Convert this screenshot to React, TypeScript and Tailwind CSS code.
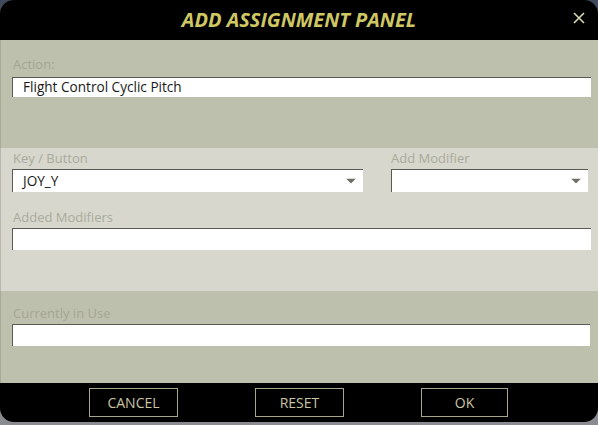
import React from "react";

const font = { fontFamily: '"Open Sans", "DejaVu Sans", sans-serif' };

function Arrow() {
  return (
    <svg width="10" height="5" viewBox="0 0 10 5" className="absolute right-[7px] top-1/2 -translate-y-1/2">
      <polygon points="0,0 10,0 5,5" fill="#6e6e66" />
    </svg>
  );
}

function Field({ className, children, arrow }: { className: string; children?: React.ReactNode; arrow?: boolean }) {
  return (
    <div className={`relative bg-white border-t border-l border-[#5a5a55] flex items-center pl-[10px] text-[13.6px] text-[#1a1a1a] ${className}`}>
      {children}
      {arrow ? <Arrow /> : null}
    </div>
  );
}

export default function App() {
  return (
    <div className="w-[598px] h-[425px] bg-[linear-gradient(180deg,#3f4b5c_0%,#5a6272_50%,#8a8c92_100%)] overflow-hidden" style={font}>
      <div className="w-[598px] h-[422px] bg-black rounded-[14px] overflow-hidden flex flex-col">
        <div className="h-[40px] relative flex items-center justify-center">
          <span className="text-[#cfc764] text-[20px] font-bold italic">ADD ASSIGNMENT PANEL</span>
          <svg width="12" height="12" viewBox="0 0 12 12" className="absolute left-[573px] top-[12px]">
            <path d="M1 1 L11 11 M11 1 L1 11" stroke="#dcd8b0" strokeWidth="1.6" />
          </svg>
        </div>
        <div className="h-[108px] bg-[#bec0ae] pt-[16px] pl-[11px] border-l border-[#a8aa98]">
          <div className="h-[16px] leading-[16px] text-[13px] text-[#a4a692] pl-[1px]">Action:</div>
          <Field className="mt-[5px] w-[579px] h-[20px]">Flight Control Cyclic Pitch</Field>
        </div>
        <div className="h-[143px] bg-[#d7d7cd] pt-[2px] pl-[11px] border-l border-[#b8b8ae]">
          <div className="flex">
            <div className="w-[379px]">
              <div className="h-[16px] leading-[16px] text-[13px] text-[#a9ab9b] pl-[1px]">Key / Button</div>
              <Field className="mt-[3px] w-[351px] h-[23px]" arrow>JOY_Y</Field>
            </div>
            <div>
              <div className="h-[16px] leading-[16px] text-[13px] text-[#a9ab9b]">Add Modifier</div>
              <Field className="mt-[3px] w-[197px] h-[23px]" arrow></Field>
            </div>
          </div>
          <div className="mt-[17px] h-[16px] leading-[16px] text-[13px] text-[#a9ab9b] pl-[1px]">Added Modifiers</div>
          <Field className="mt-[3px] w-[579px] h-[22px]"></Field>
        </div>
        <div className="h-[92px] bg-[#bec0ae] pt-[14px] pl-[11px] border-l border-[#a8aa98]">
          <div className="h-[16px] leading-[16px] text-[13px] text-[#a4a692] pl-[1px]">Currently in Use</div>
          <Field className="mt-[3px] w-[578px] h-[22px]"></Field>
        </div>
        <div className="flex-1 relative pt-[5px]">
          <div className="flex">
            <div className="ml-[89px] w-[89px] h-[29px] border border-[#a9a68c] flex items-center justify-center text-[14px] text-[#c9c5a2]">CANCEL</div>
            <div className="ml-[77px] w-[89px] h-[29px] border border-[#a9a68c] flex items-center justify-center text-[14px] text-[#c9c5a2]">RESET</div>
            <div className="ml-[77px] w-[87px] h-[29px] border border-[#a9a68c] flex items-center justify-center text-[14px] text-[#c9c5a2]">OK</div>
          </div>
        </div>
      </div>
    </div>
  );
}
